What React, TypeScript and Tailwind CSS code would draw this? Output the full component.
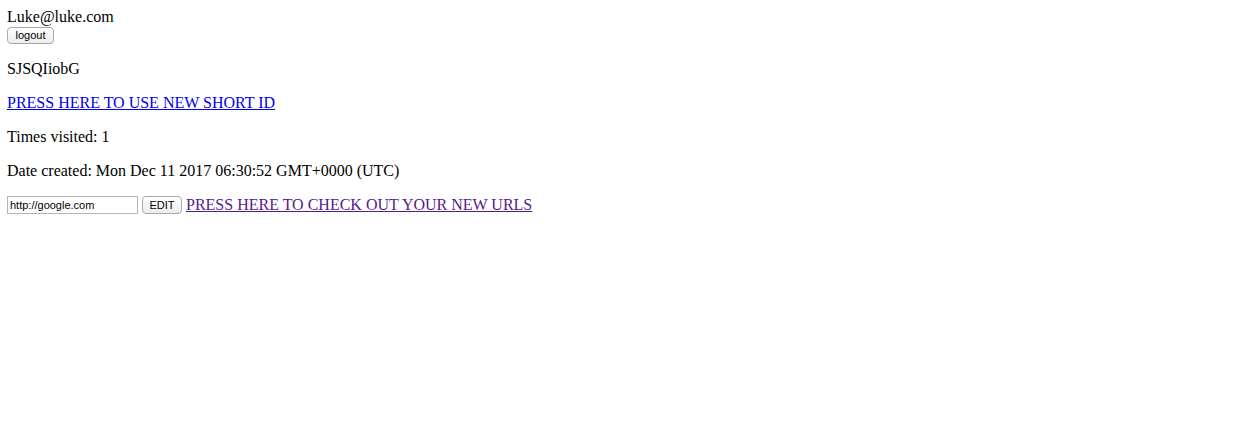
import { type FC } from 'react';

const btn =
  'h-[17px] rounded-[4px] border border-[#a9a9a9] bg-gradient-to-b from-white to-[#ececec] text-[11px] leading-[15px] text-black text-center font-["Liberation_Sans",Arial,sans-serif]';

const App: FC = () => (
  <div className='pl-[7px] pr-2 py-2 font-["Liberation_Serif","Times_New_Roman",serif] text-[16px] leading-[18px] text-black bg-white min-h-[426px]'>
    <div>Luke@luke.com</div>
    <button className={`${btn} w-[47px] mt-px block`}>logout</button>
    <p className="my-4">SJSQIiobG</p>
    <p className="my-4">
      <a href="#" className="underline text-[#0000ee]">
        PRESS HERE TO USE NEW SHORT ID
      </a>
    </p>
    <p className="my-4">Times visited: 1</p>
    <p className="my-4">Date created: Mon Dec 11 2017 06:30:52 GMT+0000 (UTC)</p>
    <div className="flex items-center gap-1">
      <input
        defaultValue="http://google.com"
        className='w-[131px] h-[18px] px-[2px] border border-[#b5b5b5] text-[11px] text-black outline-none font-["Liberation_Sans",Arial,sans-serif]'
      />
      <button className={`${btn} w-[40px] h-[18px]`}>EDIT</button>
      <a href="#" className="underline text-[#551a8b]">
        PRESS HERE TO CHECK OUT YOUR NEW URLS
      </a>
    </div>
  </div>
);

export default App;
